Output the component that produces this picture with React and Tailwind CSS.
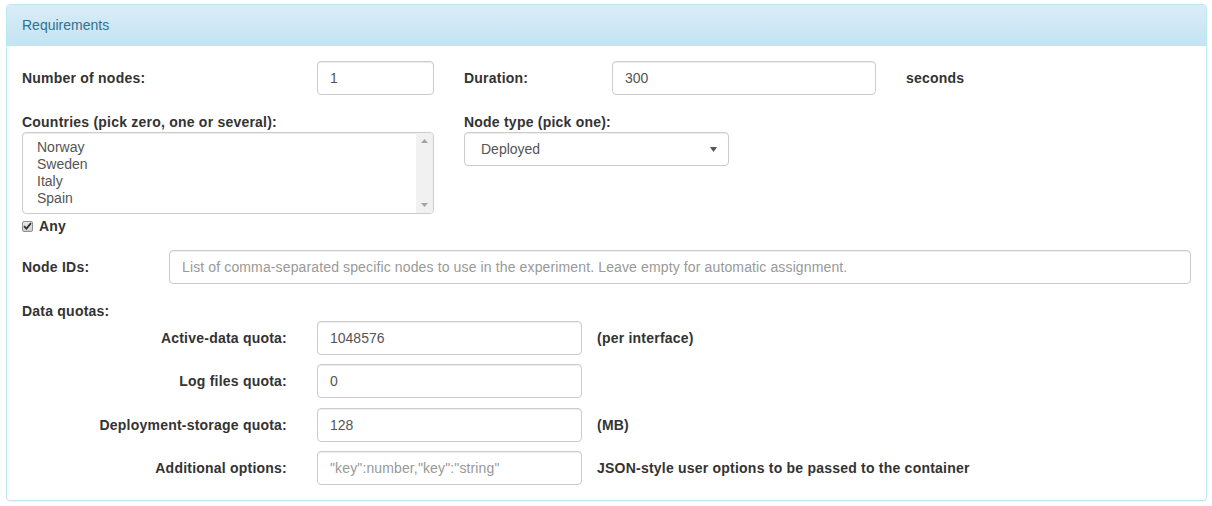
import React from "react";

const font = "font-['Liberation_Sans',Arial,sans-serif]";
const inputCls =
  "h-[34px] border border-[#ccc] rounded-[4px] bg-white shadow-[inset_0_1px_1px_rgba(0,0,0,0.075)] px-[12px] flex items-center text-[14px] text-[#555]";
const bold = "font-bold tracking-[0.22px]";

function Input({ value, placeholder, className = "" }) {
  return (
    <div className={`${inputCls} ${className}`}>
      {value ? (
        <span>{value}</span>
      ) : (
        <span className="text-[#999] tracking-[0.13px] whitespace-nowrap">{placeholder}</span>
      )}
    </div>
  );
}

function QuotaRow({ label, value, placeholder, extra, className = "" }) {
  return (
    <div className={`flex items-center ${className}`}>
      <div className={`w-[295px] pr-[30px] text-right ${bold}`}>{label}</div>
      <Input value={value} placeholder={placeholder} className="w-[265px]" />
      {extra && <div className={`ml-[15px] ${bold}`}>{extra}</div>}
    </div>
  );
}

export default function App() {
  return (
    <div className={`${font} text-[14px] text-[#333] leading-[20px] bg-white pt-[4px] pb-[6px]`}>
      <div className="ml-[6px] mr-[5px] border border-[#bce8f1] rounded-[4px] shadow-[0_1px_1px_rgba(0,0,0,0.05)] overflow-hidden">
        <div className="bg-linear-to-b from-[#d9edf7] to-[#c4e3f3] border-b border-[#bce8f1] px-[15px] py-[10px] text-[#31708f]">
          Requirements
        </div>
        <div className="px-[15px] pt-[15px] pb-[15px]">
          {/* Row 1 */}
          <div className="flex items-center h-[34px]">
            <div className={`w-[295px] ${bold}`}>Number of nodes:</div>
            <Input value="1" className="w-[117px]" />
            <div className={`ml-[30px] w-[148px] ${bold}`}>Duration:</div>
            <Input value="300" className="w-[264px]" />
            <div className={`ml-[30px] ${bold}`}>seconds</div>
          </div>

          {/* Row 2 */}
          <div className="flex mt-[15px]">
            <div className="w-[412px]">
              <div className={`${bold} pt-[2px]`}>Countries (pick zero, one or several):</div>
              <div className="h-[82px] border border-[#ccc] rounded-[4px] bg-white shadow-[inset_0_1px_1px_rgba(0,0,0,0.075)] flex overflow-hidden">
                <div className="flex-1 pl-[14px] pt-[6px] text-[#555] leading-[17px]">
                  <div>Norway</div>
                  <div>Sweden</div>
                  <div>Italy</div>
                  <div>Spain</div>
                </div>
                <div className="w-[17px] bg-[#f1f1f1] flex flex-col justify-between items-center py-[6px]">
                  <svg width="7" height="4" viewBox="0 0 7 4">
                    <path d="M0 4 L3.5 0 L7 4 Z" fill="#a3a3a3" />
                  </svg>
                  <svg width="7" height="4" viewBox="0 0 7 4">
                    <path d="M0 0 L3.5 4 L7 0 Z" fill="#a3a3a3" />
                  </svg>
                </div>
              </div>
            </div>
            <div className="ml-[30px]">
              <div className={`${bold} pt-[2px]`}>Node type (pick one):</div>
              <div className={`${inputCls} w-[265px] justify-between pl-[16px] pr-[10px]`}>
                <span>Deployed</span>
                <svg width="7" height="5" viewBox="0 0 7 5" className="mr-[1px]">
                  <path d="M0 0 L7 0 L3.5 5 Z" fill="#555" />
                </svg>
              </div>
            </div>
          </div>

          {/* Any */}
          <div className="flex items-center mt-[2px] h-[20px]">
            <span className="w-[11px] h-[11px] border border-[#8f8f8f] rounded-[2px] bg-linear-to-b from-[#e8e8e8] to-[#d0d0d0] flex items-center justify-center">
              <svg width="9" height="8" viewBox="0 0 9 8">
                <path d="M1 4.2 L3.4 6.6 L8 1.2" stroke="#333" strokeWidth="1.8" fill="none" />
              </svg>
            </span>
            <span className={`ml-[6px] ${bold}`}>Any</span>
          </div>

          {/* Node IDs */}
          <div className="flex items-center mt-[14px]">
            <div className={`w-[147px] ${bold}`}>Node IDs:</div>
            <Input
              placeholder="List of comma-separated specific nodes to use in the experiment. Leave empty for automatic assignment."
              className="flex-1"
            />
          </div>

          <div className={`${bold} mt-[17px]`}>Data quotas:</div>

          <QuotaRow label="Active-data quota:" value="1048576" extra="(per interface)" />
          <QuotaRow label="Log files quota:" value="0" className="mt-[9px]" />
          <QuotaRow label="Deployment-storage quota:" value="128" extra="(MB)" className="mt-[10px]" />
          <QuotaRow
            label="Additional options:"
            placeholder={'"key":number,"key":"string"'}
            extra="JSON-style user options to be passed to the container"
            className="mt-[9px]"
          />
        </div>
      </div>
    </div>
  );
}
